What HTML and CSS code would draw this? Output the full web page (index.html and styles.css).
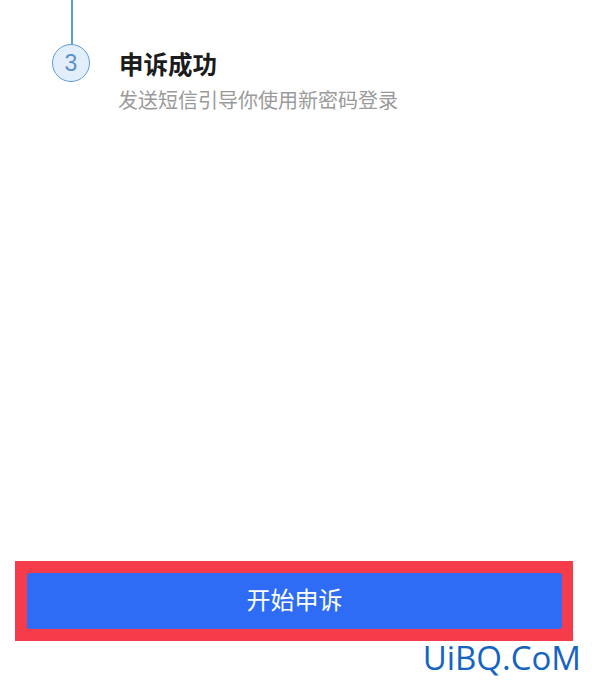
FILE: index.html
```html
<!DOCTYPE html>
<html lang="zh-CN">
<head>
<meta charset="utf-8">
<title>申诉流程</title>
<link rel="stylesheet" href="styles.css">
</head>
<body>
<main class="page">
  <section class="step">
    <div class="rail">
      <div class="rail-line"></div>
      <div class="step-num">3</div>
    </div>
    <div class="step-text">
      <h2 class="step-title">申诉成功</h2>
      <p class="step-desc">发送短信引导你使用新密码登录</p>
    </div>
  </section>

  <div class="action">
    <div class="highlight">
      <button class="btn-primary" type="button">开始申诉</button>
    </div>
    <div class="mark">UiBQ.CoM</div>
  </div>
</main>
</body>
</html>
```

FILE: styles.css
```css
* {
  box-sizing: border-box;
}

html, body {
  margin: 0;
  padding: 0;
  background: #ffffff;
}

body {
  font-family: "Noto Sans CJK SC", "Noto Sans", sans-serif;
}

.page {
  height: 682px;
  display: flex;
  flex-direction: column;
}

/* timeline step */
.step {
  display: flex;
  padding-left: 52px;
}

.rail {
  width: 38px;
  display: flex;
  flex-direction: column;
  align-items: center;
}

.rail-line {
  width: 2px;
  height: 44px;
  margin-left: 1px;
  background: #5e9dd3;
}

.step-num {
  width: 38px;
  height: 38px;
  border-radius: 50%;
  border: 1.5px solid #5e9dd3;
  background: #e2effb;
  color: #5b90c6;
  font-family: "Liberation Sans", "Noto Sans", sans-serif;
  font-size: 23px;
  display: flex;
  align-items: center;
  justify-content: center;
}

.step-text {
  margin-left: 28px;
  padding-top: 48px;
}

.step-title {
  margin: 0 0 0 1px;
  font-size: 24.5px;
  line-height: 32px;
  font-weight: 700;
  color: #1b1b1b;
}

.step-desc {
  margin: 6px 0 0;
  font-size: 20px;
  line-height: 28px;
  color: #9a9a9a;
  white-space: nowrap;
}

/* bottom action */
.action {
  margin-top: auto;
  display: flex;
  flex-direction: column;
}

.highlight {
  margin-left: 15px;
  width: 558px;
  padding: 12px 11px 12px 12px;
  background: #f63c4a;
}

.btn-primary {
  display: block;
  width: 100%;
  height: 56px;
  border: 0;
  border-radius: 3px;
  background: #2e6cf6;
  color: #ffffff;
  font-family: "Noto Sans CJK SC", sans-serif;
  font-size: 24px;
  padding: 0 0 5px;
}

.mark {
  align-self: flex-end;
  height: 41px;
  padding-right: 11px;
  font-family: "Open Sans", "Noto Sans", sans-serif;
  font-size: 33px;
  line-height: 34px;
  color: #1563c2;
}
```
